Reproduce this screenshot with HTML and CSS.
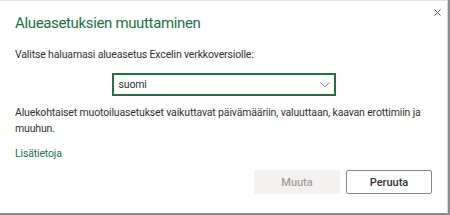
FILE: index.html
```html
<!DOCTYPE html>
<html lang="fi">

<head>
    <meta charset="UTF-8">
    <meta name="viewport" content="width=device-width, initial-scale=1.0">
    <title>Alueasetuksien muuttaminen</title>
    <link rel="stylesheet" href="styles.css">
</head>

<body>
    <div class="dialog">
        <span class="close">
            <svg width="7" height="7" viewBox="0 0 7 7">
                <path d="M0.5 0.5 L6.5 6.5 M6.5 0.5 L0.5 6.5" stroke="#605e5c" stroke-width="1" fill="none" />
            </svg>
        </span>
        <h1 class="title">Alueasetuksien muuttaminen</h1>
        <p class="intro">Valitse haluamasi alueasetus Excelin verkkoversiolle:</p>
        <div class="select-row">
            <div class="select">
                <span class="value">suomi</span>
                <svg class="chevron" width="10" height="6" viewBox="0 0 10 6">
                    <path d="M0.5 0.5 L5 5 L9.5 0.5" stroke="#8a8886" stroke-width="1" fill="none" />
                </svg>
            </div>
        </div>
        <p class="note">Aluekohtaiset muotoiluasetukset vaikuttavat päivämääriin, valuuttaan, kaavan erottimiin ja muuhun.</p>
        <a class="more" href="#">Lisätietoja</a>
        <div class="buttons">
            <button class="btn btn_disabled" disabled>Muuta</button>
            <button class="btn">Peruuta</button>
        </div>
    </div>
</body>

</html>
```

FILE: styles.css
```css
* {
    margin: 0;
    padding: 0;
    box-sizing: border-box;
}

body {
    background-color: #8a8a8a;
    font-family: Roboto, "Noto Sans", sans-serif;
    color: #323130;
}

.dialog {
    position: relative;
    width: 448px;
    height: 214px;
    background-color: #fff;
    border-top: 1px solid #e1e1e1;
    border-right: 1px solid #d6d6d6;
    border-bottom: 1px solid #8a8a8a;
    padding: 0 15px;
}

.close {
    position: absolute;
    top: 8px;
    right: 6px;
    display: flex;
}

.title {
    font-size: 15px;
    font-weight: 400;
    letter-spacing: -0.35px;
    color: #217346;
    line-height: 24px;
    padding-top: 10px;
}

.intro,
.note,
.more,
.select {
    font-size: 10.5px;
    letter-spacing: -0.15px;
}

.intro {
    line-height: 16px;
    margin-top: 12px;
}

.select-row {
    display: flex;
    justify-content: center;
    margin-top: 10px;
}

.select {
    display: flex;
    align-items: center;
    justify-content: space-between;
    width: 224px;
    height: 23px;
    border: 2px solid #217346;
    padding: 0 4px 0 5px;
}

.note {
    line-height: 16px;
    margin-top: 9px;
}

.more {
    display: block;
    line-height: 16px;
    color: #217346;
    text-decoration: none;
    margin-top: 9px;
}

.buttons {
    display: flex;
    justify-content: flex-end;
    gap: 6px;
    margin-top: 8px;
}

.btn {
    width: 86px;
    height: 24px;
    font-family: inherit;
    font-size: 11px;
    font-weight: 500;
    color: #323130;
    background-color: #fff;
    border: 1px solid #8a8886;
    border-radius: 2px;
}

.btn_disabled {
    color: #a19f9d;
    background-color: #f3f2f1;
    border-color: #f3f2f1;
}
```
